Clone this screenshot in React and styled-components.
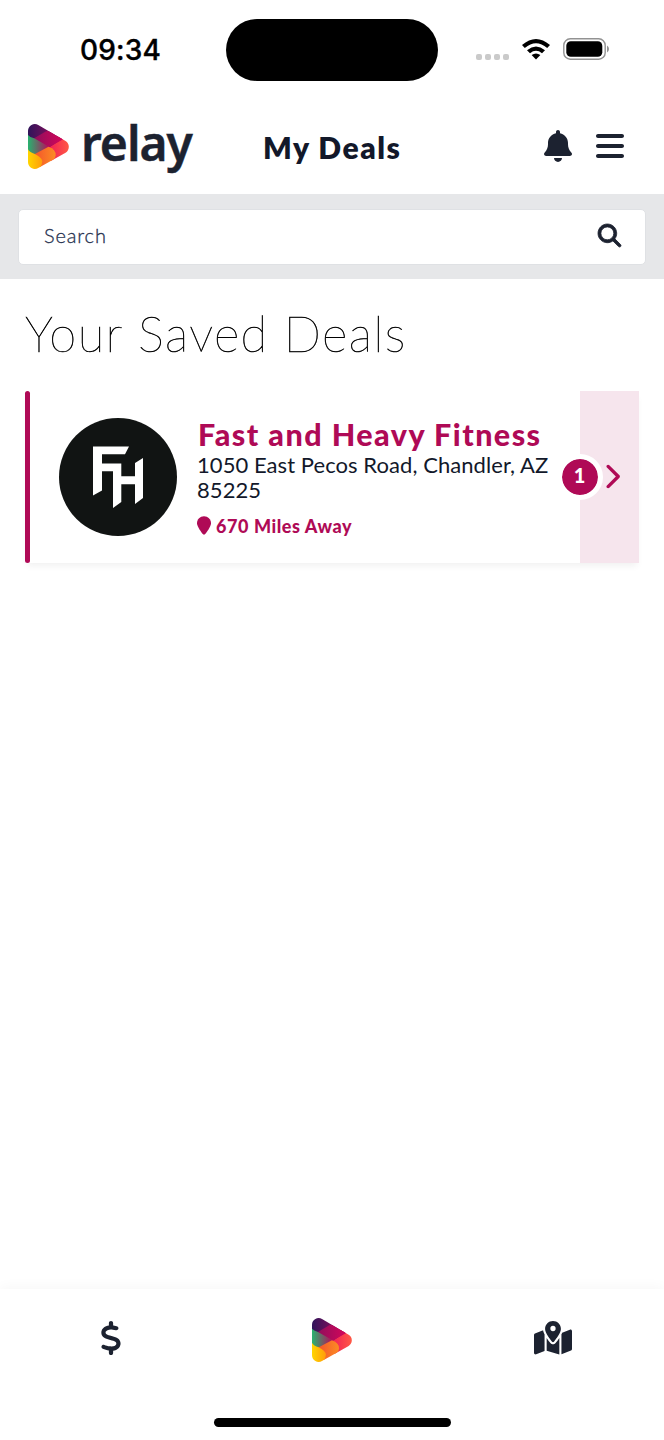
import React from "react";
import styled, { createGlobalStyle } from "styled-components";
import {
  FaBell,
  FaBars,
  FaMagnifyingGlass,
  FaLocationPin,
  FaChevronRight,
  FaDollarSign,
  FaMapLocationDot,
} from "react-icons/fa6";

const ink = "#1c2230";
const berry = "#af0a56";

const Global = createGlobalStyle`
  * { box-sizing: border-box; }
  body { margin: 0; background: #fff; font-family: Lato, "Liberation Sans", sans-serif; color: ${ink}; }
  svg { display: block; flex: none; }
`;

const Screen = styled.div`
  width: 664px;
  height: 1440px;
  display: flex;
  flex-direction: column;
  overflow: hidden;
  background: #fff;
`;

const StatusBar = styled.div`
  height: 100px;
  flex: none;
  display: grid;
  grid-template-columns: 226px 212px 1fr;
  align-items: center;
`;

const Clock = styled.div`
  padding-left: 80px;
  font: 500 28px/34px Inter, sans-serif;
  letter-spacing: 0.2px;
  -webkit-text-stroke: 0.35px #000;
  color: #000;
  white-space: nowrap;
`;

const Island = styled.div`
  height: 62px;
  border-radius: 31px;
  background: #000;
`;

const Signals = styled.div`
  display: flex;
  align-items: center;
  padding: 0 0 2px 38px;
`;

const Dots = styled.div`
  display: flex;
  gap: 3px;
  padding-top: 15px;
  margin-right: 13px;
`;

const Dot = styled.i`
  width: 6px;
  height: 6px;
  border-radius: 2px;
  background: #cacaca;
`;

const BatterySlot = styled.div`
  margin-left: 13px;
`;

const Header = styled.header`
  height: 94px;
  flex: none;
  display: grid;
  grid-template-columns: 263px 1fr auto;
  align-items: center;
  padding: 0 38px 0 0;
`;

const Brand = styled.div`
  display: flex;
  align-items: center;
  padding: 0 0 2px 28px;
  height: 94px;
`;

const Wordmark = styled.span`
  margin: -6px 0 0 12px;
  font: 600 48px/60px "Noto Sans", sans-serif;
  letter-spacing: -1px;
  -webkit-text-stroke: 0.5px ${ink};
`;

const PageTitle = styled.h1`
  margin: 0;
  font-size: 30px;
  line-height: 40px;
  font-weight: 800;
  letter-spacing: 1.5px;
  color: #12182a;
  white-space: nowrap;
`;

const Actions = styled.div`
  display: flex;
  align-items: center;
  gap: 20px;
  padding-bottom: 2px;
`;

const SearchBand = styled.div`
  height: 85px;
  flex: none;
  padding: 15px 18px 14px;
  background: #e6e7e9;
`;

const SearchField = styled.div`
  height: 56px;
  display: flex;
  align-items: center;
  justify-content: space-between;
  padding: 0 24px 4px 25px;
  border: 1px solid #dfe1e4;
  border-radius: 5px;
  background: #fff;
  font-size: 20px;
  color: #26314f;

  svg {
    overflow: visible;
    stroke: ${ink};
    stroke-width: 18px;
  }
`;

const Placeholder = styled.span`
  letter-spacing: 0.85px;
  font-weight: 300;
  -webkit-text-stroke: 0.3px #26314f;
`;

const Content = styled.main`
  flex: 1;
  padding: 24px 25px 0;
`;

const SectionTitle = styled.h2`
  margin: 0 0 28px;
  font-size: 49px;
  line-height: 60px;
  font-weight: 100;
  letter-spacing: 1.35px;
  -webkit-text-stroke: 0.5px #000;
  color: #000;
  white-space: nowrap;
`;

const DealCard = styled.article`
  height: 172px;
  display: flex;
  align-items: stretch;
  box-shadow: 0 5px 7px -2px rgba(0, 0, 0, 0.06);
`;

const Accent = styled.div`
  width: 5px;
  border-radius: 3px;
  background: ${berry};
`;

const DealLogo = styled.div`
  width: 118px;
  margin: 27px 20px 27px 29px;
`;

const DealInfo = styled.div`
  flex: 1;
  min-width: 0;
  padding-top: 26px;
  white-space: nowrap;
`;

const DealName = styled.h3`
  margin: 0 0 1px;
  padding-left: 1px;
  font-size: 30.5px;
  line-height: 34px;
  font-weight: 900;
  letter-spacing: 1.45px;
  color: ${berry};
`;

const Address = styled.p`
  margin: 0;
  font-size: 22px;
  line-height: 25px;
  letter-spacing: 0.06px;
  color: #12182a;
`;

const Distance = styled.div`
  display: flex;
  align-items: center;
  gap: 5px;
  margin-top: 12px;
  font-size: 18px;
  line-height: 24px;
  font-weight: 900;
  letter-spacing: 0.57px;
  color: ${berry};

  svg {
    width: 14px;
    height: 19px;
    margin-bottom: 2px;
  }
`;

const OpenPanel = styled.div`
  position: relative;
  width: 59px;
  display: flex;
  align-items: center;
  padding: 0 0 1px 18px;
  background: #f6e5ed;
`;

const CountBadge = styled.span`
  position: absolute;
  left: -23px;
  top: 63px;
  width: 46px;
  height: 46px;
  padding-right: 1px;
  border: 5px solid #fff;
  border-radius: 50%;
  background: ${berry};
  background-clip: padding-box;
  color: #fff;
  text-align: center;
  font-weight: 900;
  font-size: 20px;
  line-height: 33px;
`;

const TabBar = styled.nav`
  height: 151px;
  flex: none;
  display: flex;
  flex-direction: column;
  align-items: center;
  justify-content: space-between;
  padding-bottom: 13px;
  background: #fff;
  box-shadow: 0 -2px 12px rgba(0, 0, 0, 0.035);
`;

const Tabs = styled.div`
  width: 100%;
  height: 101px;
  display: grid;
  grid-template-columns: repeat(3, 1fr);
  align-items: center;
  justify-items: center;
`;

const Tab = styled.div`
  padding-bottom: ${(p) => p.$lift || 0}px;
`;

const HomeIndicator = styled.div`
  width: 237px;
  height: 9px;
  border-radius: 5px;
  background: #000;
`;

function RelayMark({ id, width, height }) {
  const ref = (n) => `url(#${id}-${n})`;
  return (
    <svg width={width} height={height} viewBox="0 0 120 132" preserveAspectRatio="none">
      <defs>
        <clipPath id={`${id}-shape`}>
          <path d="M0 20A20 20 0 0 1 30 3L110 50A20 20 0 0 1 110 84L30 129A20 20 0 0 1 0 112Z" />
        </clipPath>
        <linearGradient id={`${id}-top`}><stop stopColor="#30145a" /><stop offset="1" stopColor="#a60a5b" /></linearGradient>
        <linearGradient id={`${id}-mid`}><stop stopColor="#8d0e5c" /><stop offset="1" stopColor="#d5065a" /></linearGradient>
        <linearGradient id={`${id}-left`}><stop stopColor="#27b36f" /><stop offset="1" stopColor="#b80b5b" /></linearGradient>
        <linearGradient id={`${id}-right`}><stop stopColor="#ed0a5c" /><stop offset="1" stopColor="#ff5a45" /></linearGradient>
        <linearGradient id={`${id}-orange`}><stop stopColor="#f4522c" /><stop offset="1" stopColor="#fb8c24" /></linearGradient>
        <linearGradient id={`${id}-yellow`}><stop stopColor="#ffd500" /><stop offset="1" stopColor="#ff9c0b" /></linearGradient>
      </defs>
      <g clipPath={ref("shape")}>
        <path d="M40 60L90 36L120 40V94L70 112Z" fill={ref("right")} />
        <path d="M0 0H74L100 44L60 70L0 50Z" fill={ref("top")} />
        <path d="M14 44L53 21Q64 19 74 25L104 44L60 69Z" fill={ref("mid")} />
        <path d="M0 32Q5 38 18 42L62 67L30 96L0 92Z" fill={ref("left")} />
        <path d="M16 90L60 67Q82 75 81 92Q80 101 74 106L38 130Z" fill={ref("orange")} />
        <path d="M0 74Q5 83 20 88Q40 98 42 109Q42 120 33 132H0Z" fill={ref("yellow")} />
      </g>
    </svg>
  );
}

function WifiIcon() {
  return (
    <svg width="28" height="21" viewBox="0 0 28 21">
      <path d="M0 6Q14-6 28 6L25.2 9Q14-.5 2.8 9Z" />
      <path d="M5 11.2Q14 3.8 23 11.2L20 14.3Q14 9.4 8 14.3Z" />
      <path d="M9.6 16.1Q14 12.8 18.4 16.1L14 20.6Z" />
    </svg>
  );
}

function BatteryIcon() {
  return (
    <svg width="47" height="22" viewBox="0 0 47 22">
      <rect x=".8" y=".8" width="41.4" height="20.4" rx="6.5" fill="none" stroke="#929292" strokeWidth="1.4" />
      <rect x="3.3" y="3.3" width="36" height="15.4" rx="4.5" />
      <path d="M44 7.5Q46 8.5 46 11T44 14.5Z" fill="#929292" />
    </svg>
  );
}

function FitnessLogo() {
  return (
    <svg width="118" height="118" viewBox="0 0 118 118">
      <circle cx="59" cy="59" r="59" fill="#111413" />
      <path d="M34 28.5H70L66 36.3H43V45.5H62.3V58.3H76V45L84 40V80L76 86V66.3H62.3V84L54 90V53.3H43V72.5L34 77.5Z" fill="#fff" />
    </svg>
  );
}

export default function App() {
  return (
    <>
      <Global />
      <Screen>
        <StatusBar>
          <Clock>09:34</Clock>
          <Island />
          <Signals>
            <Dots><Dot /><Dot /><Dot /><Dot /></Dots>
            <WifiIcon />
            <BatterySlot><BatteryIcon /></BatterySlot>
          </Signals>
        </StatusBar>
        <Header>
          <Brand>
            <RelayMark id="brand" width={41} height={45} />
            <Wordmark>relay</Wordmark>
          </Brand>
          <PageTitle>My Deals</PageTitle>
          <Actions>
            <FaBell size={32} />
            <FaBars size={32} />
          </Actions>
        </Header>
        <SearchBand>
          <SearchField>
            <Placeholder>Search</Placeholder>
            <FaMagnifyingGlass size={23} color={ink} />
          </SearchField>
        </SearchBand>
        <Content>
          <SectionTitle>Your Saved Deals</SectionTitle>
          <DealCard>
            <Accent />
            <DealLogo><FitnessLogo /></DealLogo>
            <DealInfo>
              <DealName>Fast and Heavy Fitness</DealName>
              <Address>1050 East Pecos Road, Chandler, AZ<br />85225</Address>
              <Distance><FaLocationPin />670 Miles Away</Distance>
            </DealInfo>
            <OpenPanel>
              <CountBadge>1</CountBadge>
              <FaChevronRight size={27} color={berry} />
            </OpenPanel>
          </DealCard>
        </Content>
        <TabBar>
          <Tabs>
            <Tab $lift={3}><FaDollarSign size={34} /></Tab>
            <Tab><RelayMark id="tab" width={40} height={44} /></Tab>
            <Tab $lift={3}><FaMapLocationDot size={38} /></Tab>
          </Tabs>
          <HomeIndicator />
        </TabBar>
      </Screen>
    </>
  );
}
